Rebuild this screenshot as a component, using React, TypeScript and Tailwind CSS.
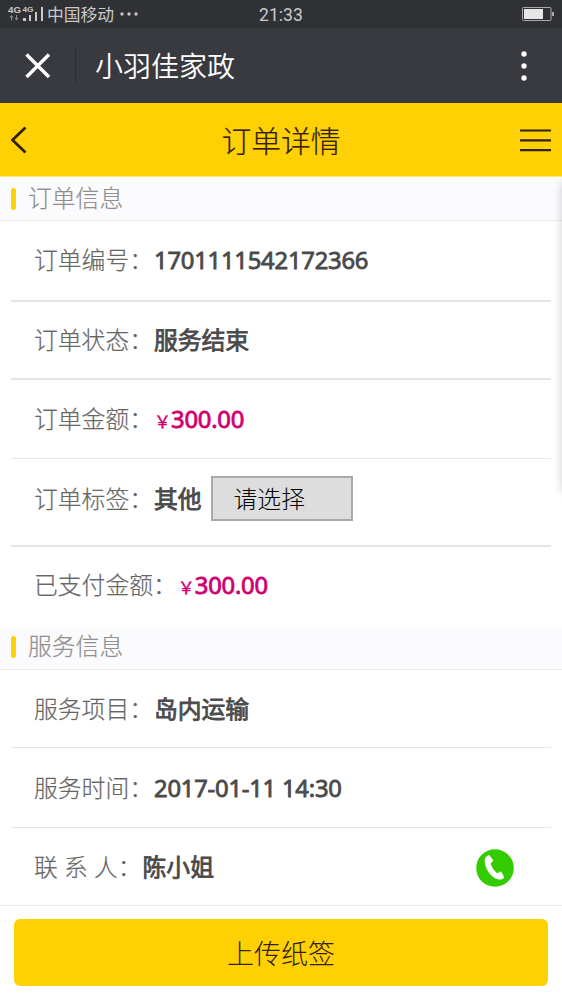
import type { ReactNode } from 'react';
import clsx from 'clsx';

export default function App() {
  return (
    <div className="relative flex h-[1000px] w-[562px] flex-col overflow-hidden bg-white font-['Noto_Sans','Noto_Sans_CJK_SC',sans-serif]">
      <StatusBar />
      <TitleBar />
      <NavBar />

      {/* edge shadow of the off-canvas menu */}
      <div
        aria-hidden
        className="pointer-events-none absolute left-[562px] top-[183px] h-[308px] w-5 shadow-[0_0_10px_rgba(0,0,0,0.2)]"
      />

      <SectionHeader title="订单信息" className="h-11" />
      <div className="flex flex-col px-[11px]">
        <Row label="订单编号：" className="h-[81px] border-b-2 pb-0.5">
          <Value className="tracking-[-0.22px]">1701111542172366</Value>
        </Row>
        <Row label="订单状态：" className="h-[78px] border-b-2">
          <Value>服务结束</Value>
        </Row>
        <Row label="订单金额：" className="h-[79px] border-b">
          <Price amount="300.00" />
        </Row>
        <Row label="订单标签：" className="h-[88px] border-b-2 pb-[7px]">
          <Value>其他</Value>
          <button className="ml-[9px] h-[45px] w-[142px] border-2 border-[#a9a9a9] bg-[#dddddd] pl-[21px] pt-[3px] text-left text-[23.8px] font-light text-black">
            请选择
          </button>
        </Row>
        <Row label="已支付金额：" className="h-[78px] pb-0.5">
          <Price amount="300.00" />
        </Row>
      </div>

      <SectionHeader title="服务信息" className="h-[45px]" />
      <div className="flex flex-col px-[11px]">
        <Row label="服务项目：" className="h-[78px] border-b">
          <Value>岛内运输</Value>
        </Row>
        <Row label="服务时间：" className="h-[80px] border-b">
          <Value className="tracking-[-0.22px]">2017-01-11 14:30</Value>
        </Row>
        <Row label="联 系 人：" className="h-[77px] pr-[37px]">
          <Value>陈小姐</Value>
          <PhoneIcon />
        </Row>
      </div>

      <div className="border-t border-[#ebebeb] px-3.5 pt-[13px]">
        <button className="flex h-[67px] w-full items-center justify-center rounded-md bg-[#ffd105] pt-[3px] text-[27px] font-light text-[#33210a]">
          上传纸签
        </button>
      </div>
    </div>
  );
}

function StatusBar() {
  return (
    <div className="grid h-7 shrink-0 grid-cols-3 items-center bg-[#303135] text-[#c9c9cb]">
      <div className="flex items-center pl-2">
        <svg width="36" height="18" viewBox="0 0 36 18" className="shrink-0" fill="currentColor" aria-hidden>
          <text x="0" y="7.500" fontSize="9" fontWeight="700" fontFamily="Liberation Sans" textLength="13" lengthAdjust="spacingAndGlyphs">4G</text>
          <text x="14.500" y="7" fontSize="8" fontWeight="700" fontFamily="Liberation Sans" textLength="11" lengthAdjust="spacingAndGlyphs">4G</text>
          <path d="M3.500 10l2 2.500h-1.500v3h-1v-3h-1.500zM8.500 15.500l-2-2.500h1.500v-3h1v3h1.500z" opacity=".6" />
          <path d="M15 13h3v3h-3zM21 10h2v6h-2zM27 7h2v9h-2zM33 2h2v14h-2z" />
        </svg>
        <span className="ml-[3px] whitespace-nowrap pt-0.5 text-[16.8px] leading-[26px]">中国移动</span>
        <svg width="19" height="4" viewBox="0 0 19 4" className="ml-1.5 shrink-0" fill="currentColor" aria-hidden>
          <circle cx="2" cy="2" r="1.700" />
          <circle cx="9" cy="2" r="1.700" />
          <circle cx="16" cy="2" r="1.700" />
        </svg>
      </div>
      <span className="pt-0.5 text-center font-[Roboto] text-[17.6px]">21:33</span>
      <svg width="33" height="14" viewBox="0 0 33 14" className="mr-2 justify-self-end" aria-hidden>
        <rect x="1.500" y=".5" width="28.500" height="13" rx="1" fill="none" stroke="#aaaaac" />
        <rect x="3" y="2" width="19" height="10" fill="#e6e6e6" />
        <path d="M31 5h2v4h-2z" fill="#aaaaac" />
      </svg>
    </div>
  );
}

function TitleBar() {
  return (
    <div className="flex h-[75px] shrink-0 items-center bg-[#393a3f] pl-[25px] pr-[35px] text-white">
      <svg width="26" height="26" viewBox="0 0 26 26" stroke="currentColor" strokeWidth="3.400" aria-hidden>
        <path d="M1.500 1.500l22.500 22.500M24 1.500l-22.500 22.500" />
      </svg>
      <div className="ml-6 h-9 w-px bg-[#2d2e32]" />
      <h1 className="ml-[19px] text-[28px] font-[350]">小羽佳家政</h1>
      <svg width="6" height="30" viewBox="0 0 6 30" className="ml-auto" fill="currentColor" aria-hidden>
        <circle cx="3" cy="3" r="2.700" />
        <circle cx="3" cy="15" r="2.700" />
        <circle cx="3" cy="27" r="2.700" />
      </svg>
    </div>
  );
}

function NavBar() {
  return (
    <div className="flex h-[74px] shrink-0 items-center justify-between border-b border-[#ffe680] bg-[#ffd105] px-[11px] text-[#33210a]">
      <svg width="32" height="28" viewBox="0 0 32 28" fill="none" stroke="currentColor" strokeWidth="2.800" aria-hidden>
        <path d="M14.500 1.500L1.500 14l13 12.500" />
      </svg>
      <h2 className="pt-1 text-[29.8px] font-light [-webkit-text-stroke:0.2px_currentColor]">订单详情</h2>
      <svg width="32" height="24" viewBox="0 0 32 24" stroke="currentColor" strokeWidth="2.200" aria-hidden>
        <path d="M1 2.500h31M1 12.300h31M1 22.200h31" />
      </svg>
    </div>
  );
}

function SectionHeader({ title, className }: { title: string; className?: string }) {
  return (
    <div className={clsx('flex shrink-0 items-center border-b border-[#ececee] bg-[#fbfbfd] pl-[11px]', className)}>
      <span className="h-[22px] w-[5px] rounded-full bg-[#ffd105]" />
      <h3 className="ml-3 text-[23.8px] font-light text-[#8f8f8f] [-webkit-text-stroke:0.2px_currentColor]">{title}</h3>
    </div>
  );
}

function Row({ label, className, children }: { label: string; className?: string; children: ReactNode }) {
  return (
    <div className={clsx('flex shrink-0 items-center border-[#e5e5e5] pl-[23px] text-[23.8px]', className)}>
      <span className="mr-px whitespace-pre pt-0.5 font-light text-[#666666] [-webkit-text-stroke:0.2px_currentColor]">
        {label}
      </span>
      {children}
    </div>
  );
}

function Value({ className, children }: { className?: string; children: ReactNode }) {
  return (
    <span className={clsx('whitespace-pre pt-0.5 text-[#4a4a4a] [-webkit-text-stroke:0.8px_currentColor]', className)}>
      {children}
    </span>
  );
}

function Price({ amount }: { amount: string }) {
  return (
    <span className="flex items-baseline pt-0.5 text-[#d0006f]">
      <span className="w-[17px] text-[17px] [-webkit-text-stroke:0.4px_currentColor]">￥</span>
      <span className="tracking-[-0.22px] [-webkit-text-stroke:0.8px_currentColor]">{amount}</span>
    </span>
  );
}

function PhoneIcon() {
  return (
    <svg width="38" height="38" viewBox="0 0 38 38" className="ml-auto mt-[3px]" role="img" aria-label="拨打电话">
      <circle cx="19" cy="19" r="18.800" fill="#33cc00" />
      <path
        d="M12.300 6.200C9.500 7.100 8.300 9.500 8.700 13C9.400 20.500 15.800 29 21.600 30.300C24.500 30.900 27.200 30.100 28.300 28.400L25.500 23C25.200 22.400 24.600 22.300 24.100 22.600L22.300 23.700C21.600 24.100 20.900 24 20.300 23.400C17.700 21 15.900 18.400 14.900 15.500C14.600 14.700 14.800 14 15.500 13.500L16.800 12.500C17.200 12.200 17.300 11.600 17 11.100L13.800 6.700C13.400 6.200 12.900 6 12.300 6.200Z"
        fill="#fff"
      />
    </svg>
  );
}
